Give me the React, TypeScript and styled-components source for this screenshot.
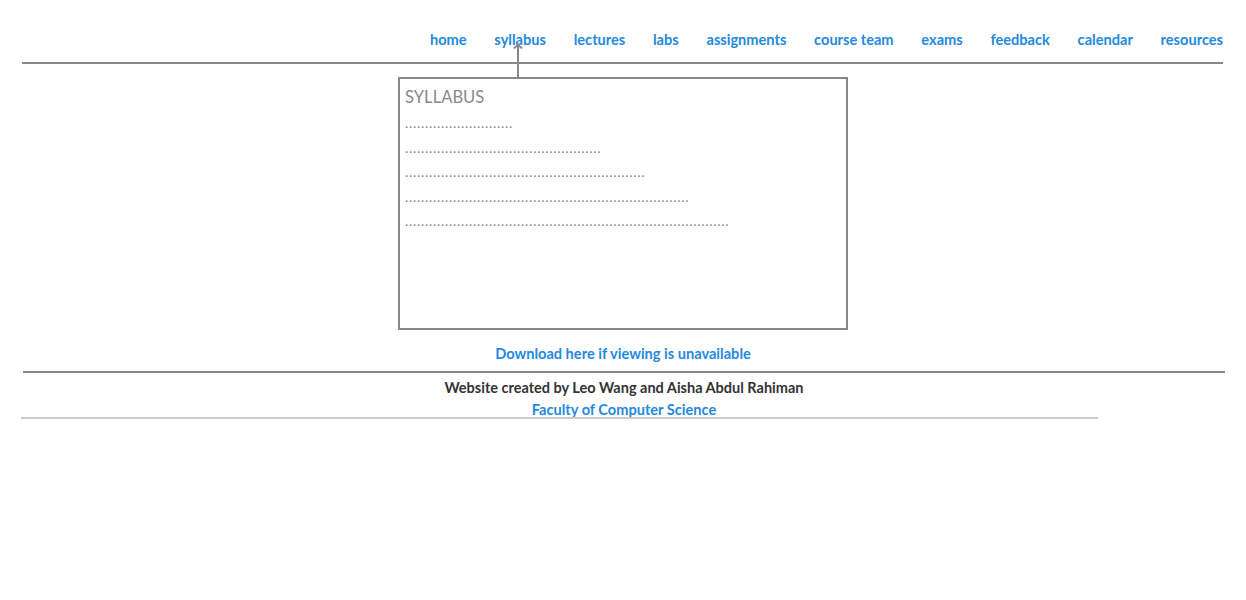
import React from "react";
import styled, { createGlobalStyle } from "styled-components";

const Global = createGlobalStyle`
  html, body { margin: 0; padding: 0; background: #fff; }
  body { font-family: Lato, "Open Sans", sans-serif; }
`;

const BLUE = "#2589e0";

const Page = styled.div`
  display: flex;
  flex-direction: column;
`;

const Header = styled.header`
  margin: 0 23px 0 22px;
  padding-top: 31px;
  border-bottom: 2px solid #888;
  height: 31px;
  display: flex;
  justify-content: flex-end;
`;

const Nav = styled.nav`
  display: flex;
  gap: 27.75px;
  height: 18px;
`;

const NavLink = styled.a<{ $active?: boolean }>`
  position: relative;
  color: ${BLUE};
  font-size: 14.6px;
  font-weight: 700;
  line-height: 18px;
  text-decoration: none;
  white-space: nowrap;
  ${(p) =>
    p.$active &&
    `
    &::after {
      content: "";
      position: absolute;
      left: calc(50% - 3px);
      top: 13px;
      width: 2px;
      height: 33px;
      background: #888;
    }
  `}
`;

const Chevron = styled.svg`
  position: absolute;
  z-index: 1;
  left: calc(50% - 7px);
  top: 12px;
  width: 10px;
  height: 6px;
`;

const Main = styled.main`
  display: flex;
  flex-direction: column;
  align-items: center;
  padding-top: 13px;
`;

const Viewer = styled.section`
  box-sizing: border-box;
  width: 450px;
  height: 253px;
  border: 2px solid #888;
  padding: 8px 5px;
  color: #888;
`;

const Title = styled.h2`
  margin: 0 0 4px;
  font-size: 16.6px;
  font-weight: 400;
  line-height: 20px;
  color: #888;
`;

const Dots = styled.div`
  font-size: 14px;
  line-height: 24.5px;
  color: #888;
  letter-spacing: 0.7px;
  white-space: nowrap;
`;

const Download = styled.a`
  margin-top: 14px;
  color: ${BLUE};
  font-size: 14.6px;
  font-weight: 700;
  line-height: 20px;
  text-decoration: none;
`;

const Footer = styled.footer`
  margin: 7px 21px 0 23px;
  border-top: 2px solid #888;
  display: flex;
  flex-direction: column;
  align-items: center;
  padding-top: 5px;
`;

const Credit = styled.p`
  margin: 0;
  color: #333;
  font-size: 14.5px;
  font-weight: 700;
  line-height: 20px;
`;

const Faculty = styled.a`
  color: ${BLUE};
  font-size: 14.6px;
  font-weight: 700;
  line-height: 14px;
  text-decoration: none;
  margin-top: 5px;
`;

const BottomRule = styled.hr`
  margin: 0 0 0 21px;
  width: 1077px;
  border: none;
  border-top: 2px solid #ccc;
  height: 0;
`;

const links = [
  "home",
  "syllabus",
  "lectures",
  "labs",
  "assignments",
  "course team",
  "exams",
  "feedback",
  "calendar",
  "resources",
];

const dotCounts = [27, 49, 60, 71, 81];

export default function App() {
  return (
    <Page>
      <Global />
      <Header>
        <Nav>
          {links.map((l) => (
            <NavLink key={l} href="#" $active={l === "syllabus"}>
              {l}
              {l === "syllabus" && (
                <Chevron viewBox="0 0 10 6">
                  <path d="M1 5.5 L5 1.5 L9 5.5" fill="none" stroke="#888" strokeWidth="1.8" />
                </Chevron>
              )}
            </NavLink>
          ))}
        </Nav>
      </Header>
      <Main>
        <Viewer>
          <Title>SYLLABUS</Title>
          {dotCounts.map((n, i) => (
            <Dots key={i}>{".".repeat(n)}</Dots>
          ))}
        </Viewer>
        <Download href="#">Download here if viewing is unavailable</Download>
      </Main>
      <Footer>
        <Credit>Website created by Leo Wang and Aisha Abdul Rahiman</Credit>
        <Faculty href="#">Faculty of Computer Science</Faculty>
      </Footer>
      <BottomRule />
    </Page>
  );
}
